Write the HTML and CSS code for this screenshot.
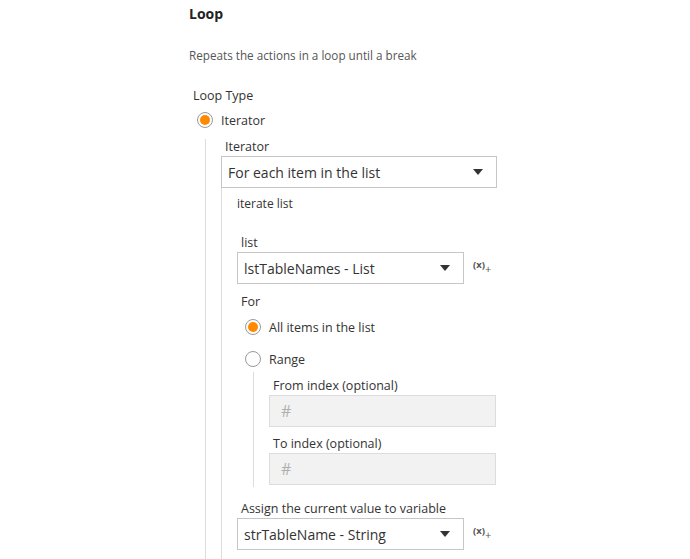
FILE: index.html
```html
<!DOCTYPE html>
<html>
<head>
<meta charset="utf-8">
<link rel="stylesheet" href="styles.css">
</head>
<body>
<div class="panel">
  <h1 class="title">Loop</h1>
  <p class="desc">Repeats the actions in a loop until a break</p>
  <div class="label loop-type">Loop Type</div>
  <div class="radio-row first">
    <span class="radio checked"></span><span class="radio-text">Iterator</span>
  </div>
  <div class="branch b1">
    <div class="label lbl">Iterator</div>
    <div class="select wide"><span>For each item in the list</span><span class="caret"></span></div>
    <div class="branch b2">
      <div class="sub">iterate list</div>
      <div class="label lbl list-lbl">list</div>
      <div class="select-row">
        <div class="select mid"><span>lstTableNames - List</span><span class="caret"></span></div>
        <span class="varicon">(x)<sub>+</sub></span>
      </div>
      <div class="label lbl for-lbl">For</div>
      <div class="radio-row r-all">
        <span class="radio checked"></span><span class="radio-text">All items in the list</span>
      </div>
      <div class="radio-row r-range">
        <span class="radio"></span><span class="radio-text">Range</span>
      </div>
      <div class="branch b3">
        <div class="label lbl">From index (optional)</div>
        <div class="input"><span>#</span></div>
        <div class="label lbl to-lbl">To index (optional)</div>
        <div class="input"><span>#</span></div>
      </div>
      <div class="label lbl assign-lbl">Assign the current value to variable</div>
      <div class="select-row">
        <div class="select mid"><span>strTableName - String</span><span class="caret"></span></div>
        <span class="varicon">(x)<sub>+</sub></span>
      </div>
    </div>
  </div>
</div>
</body>
</html>
```

FILE: styles.css
```css
html, body {
  margin: 0;
  padding: 0;
  background: #fff;
  height: 559px;
  overflow: hidden;
}
body {
  font-family: "Open Sans", "Noto Sans", sans-serif;
  color: #333;
}
.panel {
  padding-left: 189px;
  padding-top: 5px;
}
.title {
  margin: 0;
  font-size: 14px;
  line-height: 18px;
  font-weight: 700;
  color: #222;
}
.desc {
  margin: 23px 0 0;
  font-size: 11.7px;
  line-height: 18px;
  color: #555;
}
.label {
  font-size: 12.5px;
  line-height: 16px;
  color: #333;
}
.loop-type {
  margin: 23px 0 0 4px;
  line-height: 18px;
}
.radio-row {
  display: flex;
  align-items: center;
  height: 20px;
}
.radio-row.first {
  margin: 5px 0 0 8px;
}
.radio {
  box-sizing: border-box;
  width: 16px;
  height: 16px;
  border-radius: 50%;
  border: 1px solid #9a9a9a;
  background: #fff;
  position: relative;
  flex: none;
}
.radio.checked::after {
  content: "";
  position: absolute;
  left: 2px;
  top: 2px;
  width: 10px;
  height: 10px;
  border-radius: 50%;
  background: #ff8a00;
}
.radio-text {
  margin-left: 8px;
  font-size: 12.5px;
  color: #333;
}
.branch {
  border-left: 1px solid #dcdcdc;
}
.b1 {
  margin: 9px 0 0 16px;
  padding-left: 15px;
}
.lbl {
  padding-left: 4px;
}
.select {
  box-sizing: border-box;
  height: 32px;
  border: 1px solid #c6c6c6;
  display: flex;
  align-items: center;
  justify-content: space-between;
  padding: 0 13px 0 6px;
  font-size: 14px;
  color: #333;
  margin-top: 1px;
}
.select.wide {
  width: 276px;
}
.select.mid {
  width: 227px;
}
.caret {
  width: 0;
  height: 0;
  border-left: 5px solid transparent;
  border-right: 5px solid transparent;
  border-top: 6px solid #333;
}
.b2 {
  padding-left: 15px;
  padding-top: 8px;
  padding-bottom: 20px;
}
.sub {
  font-size: 12px;
  line-height: 16px;
  color: #333;
}
.list-lbl {
  margin-top: 23px;
}
.select-row {
  display: flex;
  align-items: center;
}
.varicon {
  margin-left: 9px;
  font-size: 9.5px;
  font-weight: 700;
  color: #555;
  position: relative;
  top: -1px;
}
.varicon sub {
  font-size: 11px;
  font-weight: 400;
  vertical-align: -5px;
}
.for-lbl {
  margin-top: 10px;
}
.r-all {
  margin: 7px 0 0 8px;
}
.r-range {
  margin: 12px 0 0 8px;
}
.b3 {
  margin: 3px 0 0 16px;
  padding: 6px 0 2px 15px;
}
.input {
  box-sizing: border-box;
  width: 227px;
  height: 32px;
  margin-top: 1px;
  background: #f2f2f2;
  border: 1px solid #dcdcdc;
  display: flex;
  align-items: center;
  padding-left: 11px;
  font-size: 16px;
  color: #b0b0b0;
}
.to-lbl {
  margin-top: 9px;
}
.assign-lbl {
  margin-top: 14px;
}
```
